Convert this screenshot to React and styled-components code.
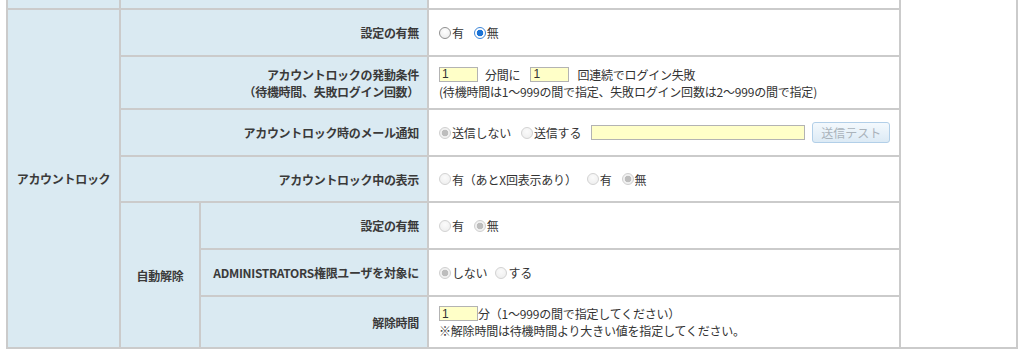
import React from "react";
import styled, { createGlobalStyle } from "styled-components";

const GlobalStyle = createGlobalStyle`
  body {
    margin: 0;
    background: #fff;
    font-family: "Noto Sans CJK JP", "Liberation Sans", sans-serif;
    font-size: 12px;
    color: #333;
  }
`;

const Page = styled.div`
  padding: 0 0 0 6px;
`;

const Table = styled.table`
  width: 1012px;
  table-layout: fixed;
  border-collapse: separate;
  border-spacing: 0;
  border: 1px solid #cbcbcb;
  border-top: none;
`;

const Row = styled.tr`
  height: ${({ h }) => h}px;
`;

const Cell = styled.td`
  border: 1px solid #cbcbcb;
  border-top: ${({ first }) => (first ? "none" : "1px solid #cbcbcb")};
  padding: 0;
  vertical-align: middle;
  line-height: 17px;
`;

const Head = styled(Cell)`
  background: #daeaf2;
  font-weight: bold;
  color: #3a3a3a;
  letter-spacing: -0.3px;
  text-align: ${({ center }) => (center ? "center" : "right")};
  padding: ${({ center }) => (center ? "0" : "0 8px 0 0")};
`;

const Value = styled(Cell)`
  background: #fff;
  padding: 0 0 0 10px;
  letter-spacing: -0.2px;
`;

const Blank = styled(Cell)`
  background: #fff;
`;

const Line = styled.div`
  display: flex;
  align-items: center;
  white-space: nowrap;
`;

const Option = styled.label`
  display: inline-flex;
  align-items: center;
  margin-right: ${({ gap }) => (gap == null ? 10 : gap)}px;
  color: #333;
`;

const Radio = styled.input.attrs({ type: "radio", readOnly: true })`
  appearance: none;
  -webkit-appearance: none;
  width: 12px;
  height: 12px;
  margin: 0 1px 0 0;
  border-radius: 50%;
  border: 1px solid #8f8f8f;
  background: radial-gradient(circle at 50% 35%, #fff, #e9e9e9);
  box-sizing: border-box;

  &:checked {
    border-color: #3d86d8;
    background: radial-gradient(circle, #1a73d6 0 3px, #fff 3.6px);
  }

  &:disabled {
    border-color: #d2d2d2;
    background: radial-gradient(circle at 50% 35%, #fbfbfb, #ececec);
  }

  &:disabled:checked {
    border-color: #cfcfcf;
    background: radial-gradient(circle, #bdbdbd 0 3px, #f1f1f1 3.6px);
  }
`;

const Field = styled.input.attrs({ type: "text", readOnly: true })`
  box-sizing: border-box;
  width: ${({ w }) => w}px;
  height: 15px;
  margin: 0 ${({ mr }) => mr || 0}px 0 0;
  padding: 0 2px;
  border: 1px solid #b3b3b3;
  background: #ffffc8;
  font-family: "Liberation Sans", sans-serif;
  font-size: 12px;
  color: #333;
  outline: none;
`;

const TestButton = styled.button`
  width: 78px;
  height: 21px;
  padding: 0;
  border: 1px solid #b2cfe8;
  border-radius: 3px;
  background: linear-gradient(#f4f9fd, #dceaf5);
  color: #aab3bb;
  font-family: inherit;
  font-size: 12px;
`;

const Text = styled.span`
  margin-right: ${({ mr }) => mr || 0}px;
`;

export default function App() {
  return (
    <Page>
      <GlobalStyle />
      <Table>
        <colgroup>
          <col style={{ width: 113 }} />
          <col style={{ width: 80 }} />
          <col style={{ width: 228 }} />
          <col style={{ width: 472 }} />
          <col style={{ width: 117 }} />
        </colgroup>
        <tbody>
          <Row h={9}>
            <Head first center />
            <Head first colSpan={2} />
            <Value first />
            <Blank first rowSpan={8} />
          </Row>
          <Row h={47}>
            <Head center rowSpan={7}>アカウントロック</Head>
            <Head colSpan={2}>設定の有無</Head>
            <Value>
              <Line>
                <Option>
                  <Radio name="r1" />有
                </Option>
                <Option>
                  <Radio name="r1" defaultChecked />無
                </Option>
              </Line>
            </Value>
          </Row>
          <Row h={53}>
            <Head colSpan={2}>
              アカウントロックの発動条件
              <br />
              （待機時間、失敗ログイン回数）
            </Head>
            <Value>
              <Line>
                <Field w={39} mr={7} value="1" />
                <Text mr={10}>分間に</Text>
                <Field w={39} mr={8} value="1" />
                <Text>回連続でログイン失敗</Text>
              </Line>
              <Line>(待機時間は1～999の間で指定、失敗ログイン回数は2～999の間で指定)</Line>
            </Value>
          </Row>
          <Row h={47}>
            <Head colSpan={2}>アカウントロック時のメール通知</Head>
            <Value>
              <Line>
                <Option>
                  <Radio name="r3" disabled defaultChecked />送信しない
                </Option>
                <Option gap={10}>
                  <Radio name="r3" disabled />送信する
                </Option>
                <Field w={214} mr={7} value="" />
                <TestButton disabled>送信テスト</TestButton>
              </Line>
            </Value>
          </Row>
          <Row h={46}>
            <Head colSpan={2}>アカウントロック中の表示</Head>
            <Value>
              <Line>
                <Option>
                  <Radio name="r4" disabled />有（あとX回表示あり）
                </Option>
                <Option>
                  <Radio name="r4" disabled />有
                </Option>
                <Option>
                  <Radio name="r4" disabled defaultChecked />無
                </Option>
              </Line>
            </Value>
          </Row>
          <Row h={47}>
            <Head center rowSpan={3}>自動解除</Head>
            <Head>設定の有無</Head>
            <Value>
              <Line>
                <Option>
                  <Radio name="r5" disabled />有
                </Option>
                <Option>
                  <Radio name="r5" disabled defaultChecked />無
                </Option>
              </Line>
            </Value>
          </Row>
          <Row h={47}>
            <Head>ADMINISTRATORS権限ユーザを対象に</Head>
            <Value>
              <Line>
                <Option gap={8}>
                  <Radio name="r6" disabled defaultChecked />しない
                </Option>
                <Option>
                  <Radio name="r6" disabled />する
                </Option>
              </Line>
            </Value>
          </Row>
          <Row h={52}>
            <Head>解除時間</Head>
            <Value>
              <Line>
                <Field w={39} mr={0} value="1" />
                <Text>分（1～999の間で指定してください）</Text>
              </Line>
              <Line>※解除時間は待機時間より大きい値を指定してください。</Line>
            </Value>
          </Row>
        </tbody>
      </Table>
    </Page>
  );
}
